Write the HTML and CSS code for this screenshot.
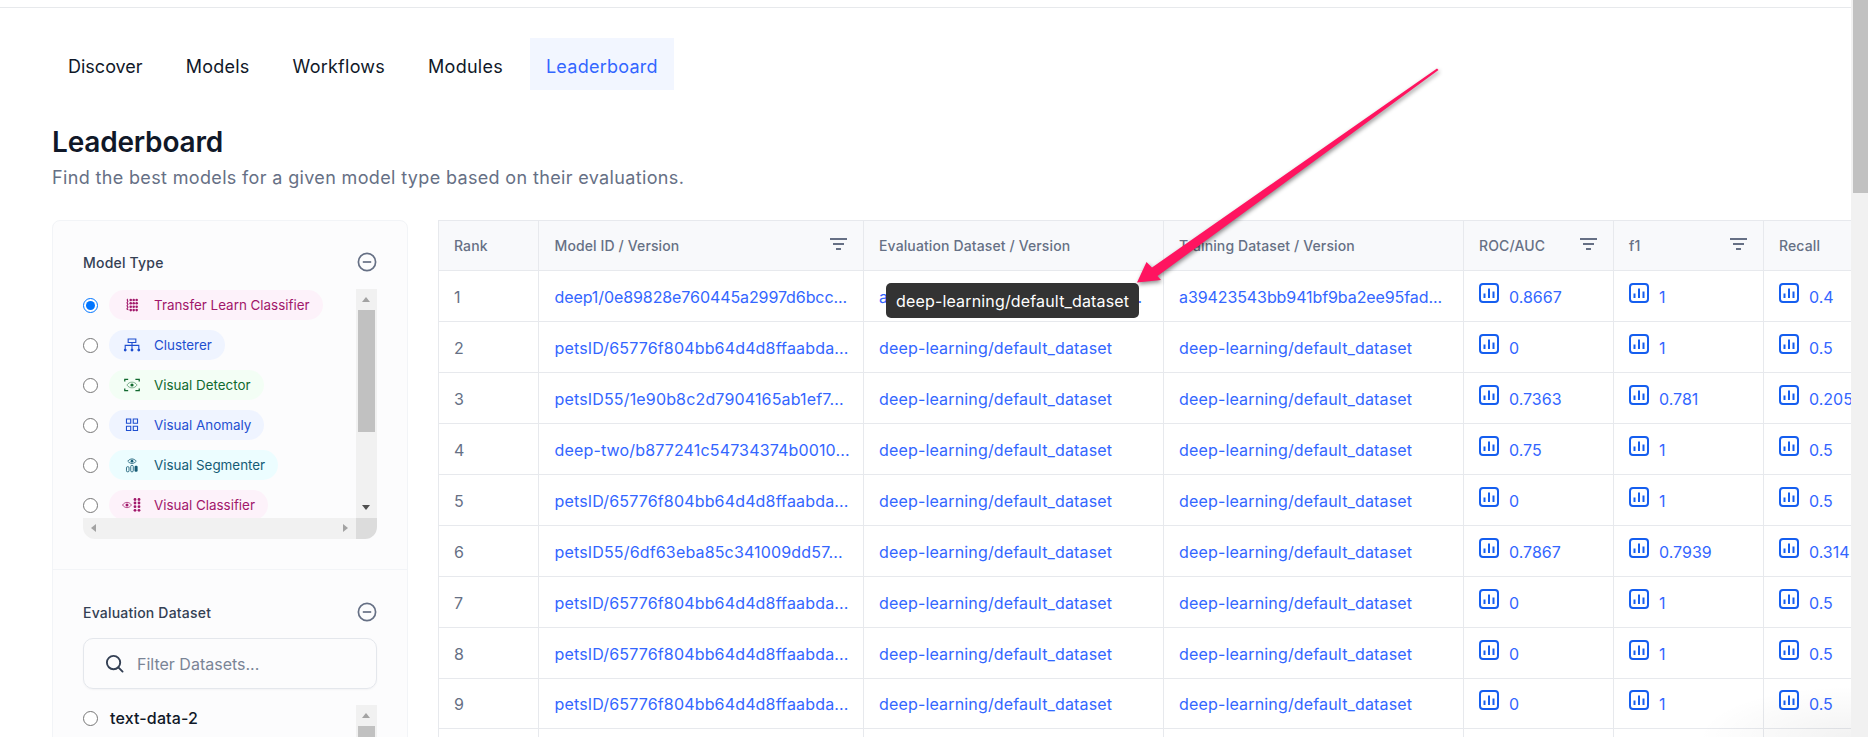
FILE: index.html
```html
<!DOCTYPE html>
<html lang="en">
<head>
<meta charset="utf-8">
<title>Leaderboard</title>
<link rel="stylesheet" href="styles.css">
</head>
<body>
<svg class="defs" width="0" height="0" aria-hidden="true">
  <symbol id="i-chart" viewBox="0 0 20 20">
    <rect x="1" y="1" width="18" height="18" rx="3" fill="none" stroke="currentColor" stroke-width="2"/>
    <path d="M5.5 15V10.5M10 15V5.5M14.5 15V8.5" fill="none" stroke="currentColor" stroke-width="2"/>
  </symbol>
  <symbol id="i-filter" viewBox="0 0 17 12">
    <path d="M0 1h17M3 6h11M6 11h5" fill="none" stroke="currentColor" stroke-width="2"/>
  </symbol>
  <symbol id="i-minus" viewBox="0 0 20 20">
    <circle cx="10" cy="10" r="8.6" fill="none" stroke="currentColor" stroke-width="1.7"/>
    <path d="M5.8 10h8.4" fill="none" stroke="currentColor" stroke-width="1.7"/>
  </symbol>
</svg>

<div class="page">
  <main class="main">
    <div class="topbar"></div>
    <nav class="tabs">
      <a class="tab tab-tight">Discover</a>
      <a class="tab">Models</a>
      <a class="tab">Workflows</a>
      <a class="tab">Modules</a>
      <a class="tab tab-active">Leaderboard</a>
    </nav>
    <header class="head">
      <h1 class="title">Leaderboard</h1>
      <p class="subtitle">Find the best models for a given model type based on their evaluations.</p>
    </header>

    <div class="content">
      <aside class="sidebar">
        <section class="section section-types">
          <div class="section-head">
            <span class="section-label">Model Type</span>
            <svg class="minus"><use href="#i-minus"/></svg>
          </div>
          <div class="scrollbox">
            <ul class="type-list">
              <li class="type-row">
                <input class="radio" type="radio" name="type" checked>
                <span class="pill pill-pink">
                  <svg class="pill-icon" viewBox="0 0 20 20" fill="currentColor"><path d="M5 3c-2 1.500 1.500 2-.3 3.500s1.800 2 0 3.500 1.800 2 0 3.500 1 2 .8 2.500" fill="none" stroke="currentColor" stroke-width="1.300"/><circle cx="8.500" cy="4" r="1.500"/><circle cx="12" cy="4" r="1.500"/><circle cx="15.500" cy="4" r="1.500"/><circle cx="8.500" cy="8" r="1.500"/><circle cx="12" cy="8" r="1.500"/><circle cx="15.500" cy="8" r="1.500"/><circle cx="8.500" cy="12" r="1.500"/><circle cx="12" cy="12" r="1.500"/><circle cx="15.500" cy="12" r="1.500"/><circle cx="8.500" cy="16" r="1.500"/><circle cx="12" cy="16" r="1.500"/><circle cx="15.500" cy="16" r="1.500"/></svg>
                  Transfer Learn Classifier
                </span>
              </li>
              <li class="type-row">
                <input class="radio" type="radio" name="type">
                <span class="pill pill-blue">
                  <svg class="pill-icon" viewBox="0 0 20 20" fill="currentColor"><path d="M5.500 3h9v4h-9zM10 7v8M2 15v-4.500h16V15" fill="none" stroke="currentColor" stroke-width="1.300"/><circle cx="2" cy="16" r="1.700"/><circle cx="10" cy="16" r="1.700"/><circle cx="18" cy="16" r="1.700"/></svg>
                  Clusterer
                </span>
              </li>
              <li class="type-row">
                <input class="radio" type="radio" name="type">
                <span class="pill pill-green">
                  <svg class="pill-icon" viewBox="0 0 20 20"><path d="M1.500 6V3.500h4M14 3.500h4.500V6M1.500 14v2.500h4M14 16.500h4.500V14" fill="none" stroke="currentColor" stroke-width="1.500"/><path d="M4 10c3-4.500 9-4.500 12 0-3 4.500-9 4.500-12 0z" fill="none" stroke="currentColor" stroke-opacity=".6" stroke-width="1"/><circle cx="10" cy="10" r="1.900" fill="currentColor"/></svg>
                  Visual Detector
                </span>
              </li>
              <li class="type-row">
                <input class="radio" type="radio" name="type">
                <span class="pill pill-blue">
                  <svg class="pill-icon" viewBox="0 0 20 20"><path d="M3.500 3h5v5h-5zM11.500 3h5v5h-5zM3.500 11.500h5v5h-5zM11.500 11.500h5v5h-5z" fill="none" stroke="currentColor" stroke-width="1.300"/></svg>
                  Visual Anomaly
                </span>
              </li>
              <li class="type-row">
                <input class="radio" type="radio" name="type">
                <span class="pill pill-teal">
                  <svg class="pill-icon" viewBox="0 0 20 20"><path d="M5 5.500c3-3.500 7-3.500 10 0-3 3.500-7 3.500-10 0z" fill="none" stroke="currentColor" stroke-width="1"/><circle cx="10" cy="5.500" r="1.600" fill="currentColor"/><rect x="3.500" y="12" width="3" height="6" rx="1.200" fill="none" stroke="currentColor" stroke-width="1"/><rect x="8.500" y="10.500" width="3" height="7.500" rx="1.200" fill="none" stroke="currentColor" stroke-width="1"/><rect x="13" y="11" width="3.600" height="7" rx="1.400" fill="currentColor"/></svg>
                  Visual Segmenter
                </span>
              </li>
              <li class="type-row">
                <input class="radio" type="radio" name="type">
                <span class="pill pill-pink">
                  <svg class="pill-icon pill-icon-wide" viewBox="0 0 20 14" fill="currentColor"><path d="M.5 7c2.500-3.500 6.500-3.500 9 0-2.500 3.500-6.500 3.500-9 0z" fill="none" stroke="currentColor" stroke-opacity=".75" stroke-width="1"/><circle cx="5" cy="7" r="1.500"/><circle cx="13" cy="1.500" r="1.400"/><circle cx="17" cy="1.500" r="1.400"/><circle cx="13" cy="5" r="1.400"/><circle cx="17" cy="5" r="1.400"/><circle cx="13" cy="8.700" r="1.400"/><circle cx="17" cy="8.700" r="1.400"/><circle cx="13" cy="12.300" r="1.400"/><circle cx="17" cy="12.300" r="1.400"/></svg>
                  Visual Classifier
                </span>
              </li>
            </ul>
            <div class="vbar vbar-tall">
              <i class="arrow arrow-up"></i>
              <b class="vthumb"></b>
              <i class="arrow arrow-down"></i>
            </div>
            <div class="hbar">
              <i class="arrow arrow-left"></i>
              <i class="arrow arrow-right"></i>
            </div>
            <div class="corner"></div>
          </div>
        </section>

        <section class="section section-data">
          <div class="section-head section-head-data">
            <span class="section-label">Evaluation Dataset</span>
            <svg class="minus"><use href="#i-minus"/></svg>
          </div>
          <label class="search">
            <svg class="search-icon" viewBox="0 0 20 20"><circle cx="9" cy="9" r="7" fill="none" stroke="currentColor" stroke-width="2"/><path d="M14 14l4.500 4.500" fill="none" stroke="currentColor" stroke-width="2" stroke-linecap="round"/></svg>
            <input class="search-input" type="text" placeholder="Filter Datasets...">
          </label>
          <div class="data-list">
            <div class="data-row">
              <input class="radio" type="radio" name="dataset">
              <span class="data-name">text-data-2</span>
            </div>
            <div class="vbar vbar-short">
              <i class="arrow arrow-up"></i>
              <b class="vthumb vthumb-short"></b>
            </div>
          </div>
        </section>
      </aside>

      <div class="table-wrap">
        <table class="board">
          <colgroup>
            <col class="c-rank"><col class="c-model"><col class="c-data"><col class="c-data">
            <col class="c-metric"><col class="c-metric"><col class="c-metric">
          </colgroup>
          <thead>
            <tr>
              <th>Rank</th>
              <th><div class="th-in">Model ID / Version<svg class="filter"><use href="#i-filter"/></svg></div></th>
              <th>Evaluation Dataset / Version</th>
              <th>Training Dataset / Version</th>
              <th><div class="th-in">ROC/AUC<svg class="filter"><use href="#i-filter"/></svg></div></th>
              <th><div class="th-in">f1<svg class="filter"><use href="#i-filter"/></svg></div></th>
              <th>Recall</th>
            </tr>
          </thead>
          <tbody>
            <tr>
              <td class="rank">1</td>
              <td><a class="link link-tight">deep1/0e89828e760445a2997d6bcc...</a></td>
              <td><a class="link link-tight">a39423543bb941bf9ba2ee95fad...</a></td>
              <td><a class="link link-tight">a39423543bb941bf9ba2ee95fad...</a></td>
              <td><div class="metric"><svg class="chart"><use href="#i-chart"/></svg>0.8667</div></td>
              <td><div class="metric"><svg class="chart"><use href="#i-chart"/></svg>1</div></td>
              <td><div class="metric"><svg class="chart"><use href="#i-chart"/></svg>0.4</div></td>
            </tr>
            <tr>
              <td class="rank">2</td>
              <td><a class="link">petsID/65776f804bb64d4d8ffaabda...</a></td>
              <td><a class="link">deep-learning/default_dataset</a></td>
              <td><a class="link">deep-learning/default_dataset</a></td>
              <td><div class="metric"><svg class="chart"><use href="#i-chart"/></svg>0</div></td>
              <td><div class="metric"><svg class="chart"><use href="#i-chart"/></svg>1</div></td>
              <td><div class="metric"><svg class="chart"><use href="#i-chart"/></svg>0.5</div></td>
            </tr>
            <tr>
              <td class="rank">3</td>
              <td><a class="link">petsID55/1e90b8c2d7904165ab1ef7...</a></td>
              <td><a class="link">deep-learning/default_dataset</a></td>
              <td><a class="link">deep-learning/default_dataset</a></td>
              <td><div class="metric"><svg class="chart"><use href="#i-chart"/></svg>0.7363</div></td>
              <td><div class="metric"><svg class="chart"><use href="#i-chart"/></svg>0.781</div></td>
              <td><div class="metric"><svg class="chart"><use href="#i-chart"/></svg>0.205</div></td>
            </tr>
            <tr>
              <td class="rank">4</td>
              <td><a class="link">deep-two/b877241c54734374b0010...</a></td>
              <td><a class="link">deep-learning/default_dataset</a></td>
              <td><a class="link">deep-learning/default_dataset</a></td>
              <td><div class="metric"><svg class="chart"><use href="#i-chart"/></svg>0.75</div></td>
              <td><div class="metric"><svg class="chart"><use href="#i-chart"/></svg>1</div></td>
              <td><div class="metric"><svg class="chart"><use href="#i-chart"/></svg>0.5</div></td>
            </tr>
            <tr>
              <td class="rank">5</td>
              <td><a class="link">petsID/65776f804bb64d4d8ffaabda...</a></td>
              <td><a class="link">deep-learning/default_dataset</a></td>
              <td><a class="link">deep-learning/default_dataset</a></td>
              <td><div class="metric"><svg class="chart"><use href="#i-chart"/></svg>0</div></td>
              <td><div class="metric"><svg class="chart"><use href="#i-chart"/></svg>1</div></td>
              <td><div class="metric"><svg class="chart"><use href="#i-chart"/></svg>0.5</div></td>
            </tr>
            <tr>
              <td class="rank">6</td>
              <td><a class="link">petsID55/6df63eba85c341009dd57...</a></td>
              <td><a class="link">deep-learning/default_dataset</a></td>
              <td><a class="link">deep-learning/default_dataset</a></td>
              <td><div class="metric"><svg class="chart"><use href="#i-chart"/></svg>0.7867</div></td>
              <td><div class="metric"><svg class="chart"><use href="#i-chart"/></svg>0.7939</div></td>
              <td><div class="metric"><svg class="chart"><use href="#i-chart"/></svg>0.314</div></td>
            </tr>
            <tr>
              <td class="rank">7</td>
              <td><a class="link">petsID/65776f804bb64d4d8ffaabda...</a></td>
              <td><a class="link">deep-learning/default_dataset</a></td>
              <td><a class="link">deep-learning/default_dataset</a></td>
              <td><div class="metric"><svg class="chart"><use href="#i-chart"/></svg>0</div></td>
              <td><div class="metric"><svg class="chart"><use href="#i-chart"/></svg>1</div></td>
              <td><div class="metric"><svg class="chart"><use href="#i-chart"/></svg>0.5</div></td>
            </tr>
            <tr>
              <td class="rank">8</td>
              <td><a class="link">petsID/65776f804bb64d4d8ffaabda...</a></td>
              <td><a class="link">deep-learning/default_dataset</a></td>
              <td><a class="link">deep-learning/default_dataset</a></td>
              <td><div class="metric"><svg class="chart"><use href="#i-chart"/></svg>0</div></td>
              <td><div class="metric"><svg class="chart"><use href="#i-chart"/></svg>1</div></td>
              <td><div class="metric"><svg class="chart"><use href="#i-chart"/></svg>0.5</div></td>
            </tr>
            <tr>
              <td class="rank">9</td>
              <td><a class="link">petsID/65776f804bb64d4d8ffaabda...</a></td>
              <td><a class="link">deep-learning/default_dataset</a></td>
              <td><a class="link">deep-learning/default_dataset</a></td>
              <td><div class="metric"><svg class="chart"><use href="#i-chart"/></svg>0</div></td>
              <td><div class="metric"><svg class="chart"><use href="#i-chart"/></svg>1</div></td>
              <td><div class="metric"><svg class="chart"><use href="#i-chart"/></svg>0.5</div></td>
            </tr>
            <tr class="row-empty"><td></td><td></td><td></td><td></td><td></td><td></td><td></td></tr>
          </tbody>
        </table>
      </div>
    </div>

    <div class="tooltip">deep-learning/default_dataset</div>
    <svg class="callout" viewBox="0 0 1868 737" aria-hidden="true">
      <polygon class="callout-arrow" points="1137,282.500 1146.500,262 1152,267.500 1437,68.500 1438.500,70 1157.500,276 1161,280"/>
    </svg>
    <div class="corner-glow"></div>
  </main>
  <div class="page-scroll"><b class="page-thumb"></b></div>
</div>
</body>
</html>
```
FILE: styles.css
```css
* { box-sizing: border-box; }
html, body { margin: 0; height: 100%; overflow: hidden; background: #fff; }
body { font-family: Inter, "Noto Sans", "Liberation Sans", sans-serif; color: #101828; }
.defs { display: block; height: 0; }
ul { list-style: none; margin: 0; padding: 0; }

.page { display: flex; height: 737px; }
.main { position: relative; flex: 1; min-width: 0; height: 737px; overflow: hidden; }
.page-scroll { width: 17px; background: #f1f1f1; padding-left: 2px; }
.page-thumb { display: block; height: 193px; background: #c1c1c1; }

.topbar { height: 8px; border-bottom: 1px solid #e7e9ec; }

.tabs { display: flex; gap: 11px; margin-top: 30px; padding-left: 52px; height: 52px; }
.tab { display: flex; align-items: center; padding: 4px 16px 0; font-size: 18px; letter-spacing: .25px; color: #101828; }
.tab-tight { letter-spacing: 0; }
.tab-active { background: #f2f6ff; color: #3366ff; }

.head { padding: 34px 0 0 52px; }
.title { margin: 0; font-size: 28px; font-weight: 600; letter-spacing: -.2px; line-height: 36px; color: #101828; }
.subtitle { margin: 5px 0 0; font-size: 18px; letter-spacing: .35px; line-height: 26px; color: #667085; }

.content { display: flex; gap: 30px; margin-top: 29px; padding-left: 52px; align-items: flex-start; }

.sidebar { flex: 0 0 355px; height: 600px; background: #fcfcfd; border: 1px solid #f2f4f7; border-radius: 8px; }
.section { padding: 0 30px; }
.section-types { height: 349px; border-bottom: 1px solid #f2f4f7; padding-top: 31px; }
.section-data { padding-top: 32px; }
.section-head { display: flex; justify-content: space-between; align-items: center; height: 20px; margin-bottom: 17px; }
.section-head-data { margin-bottom: 16px; }
.section-label { font-size: 14px; font-weight: 500; letter-spacing: .2px; color: #344054; }
.minus { width: 20px; height: 20px; color: #667085; }

.scrollbox { display: grid; grid-template-columns: 273px 21px; grid-template-rows: 229px 21px; width: 294px; }
.type-list { display: flex; flex-direction: column; gap: 10px; overflow: hidden; padding-top: 1px; }
.type-row { display: flex; align-items: center; gap: 11px; flex: none; }
.radio { width: 15px; height: 15px; margin: 0; flex: none; }
.pill { display: flex; align-items: center; height: 30px; border-radius: 15px; padding: 0 13px; font-size: 13.4px; line-height: 30px; white-space: nowrap; }
.pill-icon { width: 20px; height: 20px; flex: none; margin-right: 12px; transform: scale(.85); }
.pill-icon-wide { width: 20px; height: 14px; transform: none; }
.pill-pink { background: #fdf2fa; color: #a1176a; }
.pill-blue { background: #eff4ff; color: #1f4fd0; }
.pill-green { background: #f3fef5; color: #11692f; }
.pill-teal { background: #ecfdff; color: #155b75; }

.vbar { position: relative; background: #f1f1f1; }
.vbar-tall { width: 21px; padding: 21px 2px 0 2px; }
.vthumb { display: block; height: 122px; background: #c1c1c1; }
.vbar-short { width: 21px; height: 60px; padding: 21px 2px 0 2px; }
.vthumb-short { height: 40px; }
.hbar { position: relative; background: #f1f1f1; border-bottom-left-radius: 12px; }
.corner { background: #dcdcdc; border-bottom-right-radius: 12px; }

.arrow { position: absolute; width: 0; height: 0; border-style: solid; border-color: transparent; }
.arrow-up { top: 8px; left: 6px; border-width: 0 4.500px 5px; border-bottom-color: #a3a3a3; }
.arrow-down { bottom: 8px; left: 6px; border-width: 5px 4.500px 0; border-top-color: #505050; }
.arrow-left { top: 6px; left: 8px; border-width: 4.500px 5px 4.500px 0; border-right-color: #a3a3a3; }
.arrow-right { top: 6px; right: 8px; border-width: 4.500px 0 4.500px 5px; border-left-color: #a3a3a3; }

.search { display: flex; align-items: center; width: 294px; height: 51px; border: 1px solid #e4e7ec; border-radius: 10px; padding-left: 21px; gap: 13px; color: #344054; box-shadow: 0 1px 2px rgba(16, 24, 40, .04); }
.search-icon { width: 19px; height: 19px; flex: none; }
.search-input { flex: 1; min-width: 0; border: 0; outline: 0; background: transparent; font: 400 16px Inter, "Noto Sans", sans-serif; color: #101828; padding: 0; }
.search-input::placeholder { color: #7a8496; opacity: 1; }

.data-list { display: flex; justify-content: space-between; align-items: flex-start; width: 294px; margin-top: 16px; }
.data-row { display: flex; align-items: center; gap: 12px; height: 26px; }
.data-name { font-size: 16px; font-weight: 500; letter-spacing: .15px; color: #101828; }

.table-wrap { flex: 1; min-width: 0; overflow: hidden; }
.board { border-collapse: collapse; table-layout: fixed; width: 1325px; }
.c-rank { width: 99.500px; }
.c-model { width: 325.500px; }
.c-data { width: 300px; }
.c-metric { width: 150px; }
.board th, .board td { border: 1px solid #e7e9ed; padding: 0 16px 0 15px; text-align: left; }
.board th:nth-child(2), .board td:nth-child(2) { padding-left: 16px; }
.board th { height: 50px; background: #f8f9fb; font-size: 14px; font-weight: 500; letter-spacing: .12px; color: #667085; white-space: nowrap; }
.board td { height: 50.950px; padding-top: 2px; font-size: 16px; letter-spacing: .16px; white-space: nowrap; overflow: hidden; }
.board .rank { color: #667085; }
.link { color: #3366ff; }
.link-tight { letter-spacing: -.09px; }
.th-in { display: flex; justify-content: space-between; align-items: center; }
.filter { width: 17px; height: 12px; color: #667085; flex: none; position: relative; top: -2px; }
.metric { display: flex; align-items: center; gap: 10px; color: #3366ff; letter-spacing: 0; }
.chart { width: 20px; height: 20px; flex: none; color: #155eef; position: relative; top: -4px; }
.row-empty td { height: 50.950px; }

.tooltip { position: absolute; left: 886px; top: 283px; width: 253px; height: 35px; padding: 0 10px; border-radius: 5px; background: #333; color: #fff; font-size: 16px; letter-spacing: .16px; line-height: 37px; white-space: nowrap; }
.callout { position: absolute; left: 0; top: 0; width: 1868px; height: 737px; pointer-events: none; }
.callout-arrow { fill: #ff1460; filter: drop-shadow(1px 2px 2px rgba(0, 0, 0, .45)); }
.corner-glow { position: absolute; right: 0; bottom: 0; width: 150px; height: 50px; background: radial-gradient(ellipse at 100% 100%, rgba(0, 0, 0, .05), rgba(0, 0, 0, 0) 72%); pointer-events: none; }
```
